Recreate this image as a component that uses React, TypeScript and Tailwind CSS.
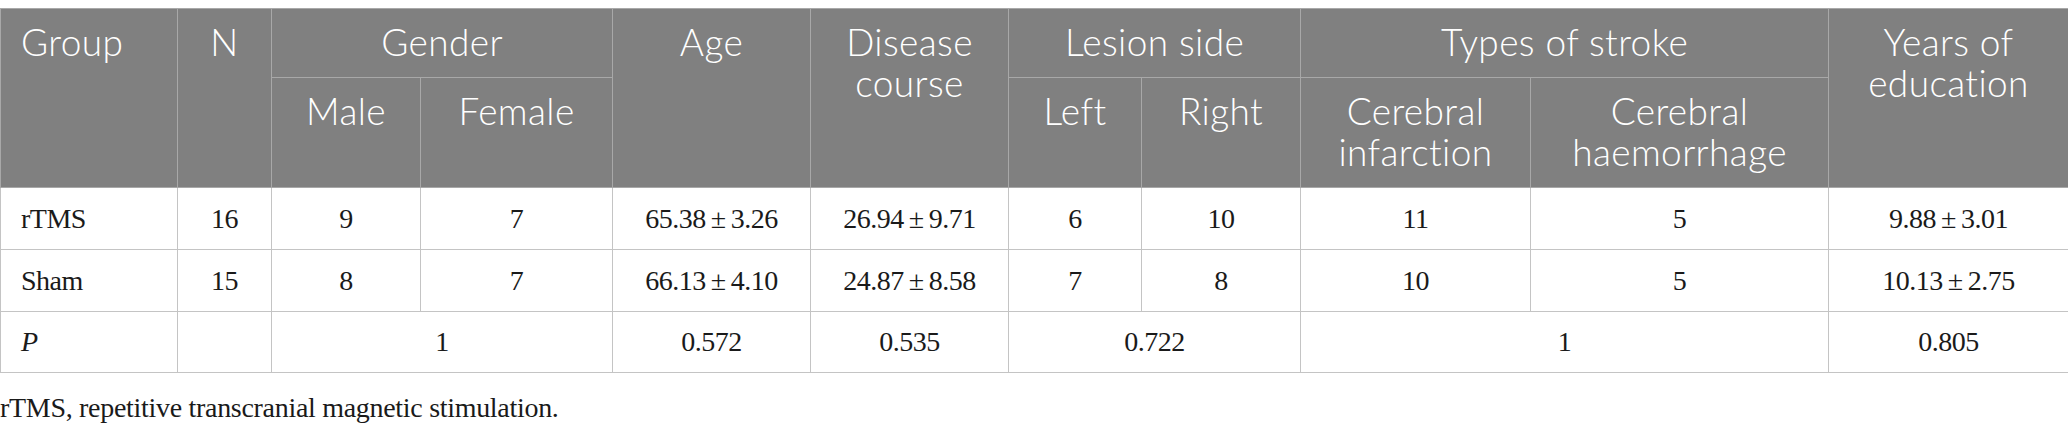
import React from "react";

const head = "bg-[#808080] text-white border border-[#a8a8a8] align-top font-light pt-[12px] px-2 leading-[41px] text-[37px] tracking-[0.4px]";
const cell = "border border-[#c4c4c4] text-center align-middle text-[28px] tracking-[-0.5px]";

const rows = [
  { group: "rTMS", n: "16", male: "9", female: "7", age: "65.38\u2009±\u20093.26", course: "26.94\u2009±\u20099.71", left: "6", right: "10", inf: "11", hae: "5", edu: "9.88\u2009±\u20093.01" },
  { group: "Sham", n: "15", male: "8", female: "7", age: "66.13\u2009±\u20094.10", course: "24.87\u2009±\u20098.58", left: "7", right: "8", inf: "10", hae: "5", edu: "10.13\u2009±\u20092.75" },
];

export default function App() {
  return (
    <div className="w-[2068px] bg-white pt-2">
      <table className="w-[2068px] table-fixed border-collapse text-[#1a1a1a]" style={{ fontFamily: '"Liberation Serif", serif' }}>
        <colgroup>
          <col className="w-[177px]" />
          <col className="w-[94px]" />
          <col className="w-[149px]" />
          <col className="w-[192px]" />
          <col className="w-[198px]" />
          <col className="w-[198px]" />
          <col className="w-[133px]" />
          <col className="w-[159px]" />
          <col className="w-[230px]" />
          <col className="w-[298px]" />
          <col className="w-[240px]" />
        </colgroup>
        <thead style={{ fontFamily: 'Lato, "Noto Sans", sans-serif' }}>
          <tr className="h-[69px]">
            <th rowSpan={2} className={`${head} text-left pl-[20px]`}>Group</th>
            <th rowSpan={2} className={`${head} text-center`}>N</th>
            <th colSpan={2} className={`${head} text-center`}>Gender</th>
            <th rowSpan={2} className={`${head} text-center`}>Age</th>
            <th rowSpan={2} className={`${head} text-center`}>Disease<br />course</th>
            <th colSpan={2} className={`${head} text-center`}>Lesion side</th>
            <th colSpan={2} className={`${head} text-center`}>Types of stroke</th>
            <th rowSpan={2} className={`${head} text-center`}>Years of<br />education</th>
          </tr>
          <tr className="h-[110px]">
            <th className={`${head} text-center`}>Male</th>
            <th className={`${head} text-center`}>Female</th>
            <th className={`${head} text-center`}>Left</th>
            <th className={`${head} text-center`}>Right</th>
            <th className={`${head} text-center`}>Cerebral<br />infarction</th>
            <th className={`${head} text-center`}>Cerebral<br />haemorrhage</th>
          </tr>
        </thead>
        <tbody>
          {rows.map(r => (
            <tr key={r.group} className="h-[62px]">
              <td className={`${cell} text-left pl-[20px]`}>{r.group}</td>
              <td className={cell}>{r.n}</td>
              <td className={cell}>{r.male}</td>
              <td className={cell}>{r.female}</td>
              <td className={cell}>{r.age}</td>
              <td className={cell}>{r.course}</td>
              <td className={cell}>{r.left}</td>
              <td className={cell}>{r.right}</td>
              <td className={cell}>{r.inf}</td>
              <td className={cell}>{r.hae}</td>
              <td className={cell}>{r.edu}</td>
            </tr>
          ))}
          <tr className="h-[61px]">
            <td className={`${cell} text-left pl-[20px] italic`}>P</td>
            <td className={cell}></td>
            <td colSpan={2} className={cell}>1</td>
            <td className={cell}>0.572</td>
            <td className={cell}>0.535</td>
            <td colSpan={2} className={cell}>0.722</td>
            <td colSpan={2} className={cell}>1</td>
            <td className={cell}>0.805</td>
          </tr>
        </tbody>
      </table>
      <p className="mt-[14px] text-[28px] text-[#1a1a1a] tracking-[-0.3px]" style={{ fontFamily: '"Liberation Serif", serif' }}>
        rTMS, repetitive transcranial magnetic stimulation.
      </p>
    </div>
  );
}
